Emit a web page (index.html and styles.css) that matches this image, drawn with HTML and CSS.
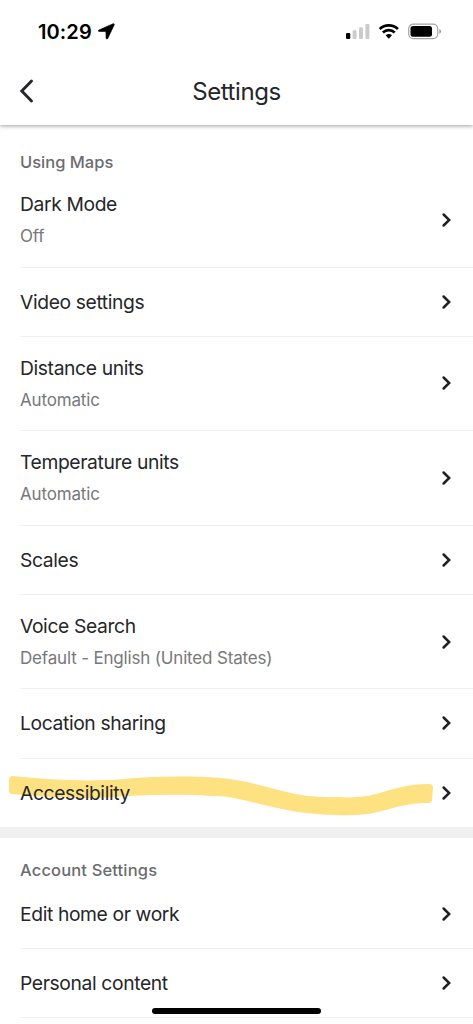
FILE: index.html
```html
<!DOCTYPE html>
<html lang="en">
<head>
<meta charset="utf-8">
<title>Settings</title>
<link rel="stylesheet" href="styles.css">
</head>
<body>
<svg class="defs" width="0" height="0" aria-hidden="true">
  <symbol id="chevron" viewBox="0 0 12 16"><path d="M2.600 2.500 8.200 8l-5.600 5.500" fill="none" stroke="#202124" stroke-width="2.500" stroke-linecap="round" stroke-linejoin="miter"/></symbol>
</svg>
<div class="screen">
  <header class="top">
    <div class="status">
      <span class="time">10:29</span>
      <svg class="arrow" width="17" height="17" viewBox="0 0 17 17"><path stroke="#000" stroke-width=".6" d="M15 .8.900 7c-1 .5-.8 1.400.3 1.400l6.700.2.200 6.500c0 1.100 1.200 1.300 1.700.3L16.200 1.900C16.500.9 16 .4 15 .8Z"/></svg>
      <svg class="icons" width="98" height="18" viewBox="0 0 98 18">
        <rect x="0" y="10" width="4.300" height="6" rx="1.300"/>
        <g fill="#cbcbcb"><rect x="6.600" y="7.300" width="4" height="8.700" rx="1.200"/><rect x="13" y="4.200" width="4" height="11.800" rx="1.200"/><rect x="19.400" y="1" width="4" height="15" rx="1.200"/></g>
        <g fill="none" stroke="#000" stroke-width="2.700"><path d="M33.700 5.900a13.300 13.300 0 0 1 18.200 0"/><path d="M36.900 9.400a8.600 8.600 0 0 1 11.800 0"/></g>
        <path d="M39.600 12.300q3.200-2.400 6.400 0L42.800 15.800Z"/>
        <rect x="62.700" y="1.200" width="29" height="14.400" rx="4.500" fill="none" stroke="#a5a5a5" stroke-width="1.200"/>
        <rect x="64.500" y="3" width="21.500" height="10.800" rx="2.500"/>
        <path d="M93.300 6q1.800.7 1.800 2.400t-1.800 2.400Z" fill="#999"/>
      </svg>
    </div>
    <div class="bar">
      <svg class="back" width="16" height="26" viewBox="0 0 16 26"><path d="M12.500 3 2.800 13l9.700 10" fill="none" stroke="#252629" stroke-width="2.900" stroke-linecap="round"/></svg>
      <h1 class="title">Settings</h1>
    </div>
  </header>
  <main>
    <section class="group">
      <h2 class="label">Using Maps</h2>
      <div class="row tall"><div><p class="name">Dark Mode</p><p class="value">Off</p></div><svg class="go"><use href="#chevron"/></svg></div>
      <div class="row"><p class="name">Video settings</p><svg class="go"><use href="#chevron"/></svg></div>
      <div class="row tall"><div><p class="name">Distance units</p><p class="value">Automatic</p></div><svg class="go"><use href="#chevron"/></svg></div>
      <div class="row tall"><div><p class="name">Temperature units</p><p class="value">Automatic</p></div><svg class="go"><use href="#chevron"/></svg></div>
      <div class="row"><p class="name">Scales</p><svg class="go"><use href="#chevron"/></svg></div>
      <div class="row tall"><div><p class="name">Voice Search</p><p class="value">Default - English (United States)</p></div><svg class="go"><use href="#chevron"/></svg></div>
      <div class="row"><p class="name">Location sharing</p><svg class="go"><use href="#chevron"/></svg></div>
      <div class="row marked">
        <svg class="marker" width="430" height="44" viewBox="0 0 430 44"><path d="M4 3C40 7 82 9 115 6 150 3 182 3 213 5 258 10 282 26 327 24 374 27 375 12 420 11Q424 11 424 14L423 27Q423 30 419 30C377 31 378 44 327 42 265 41 236 22 202 23 171 21 153 22 115 23 80 27 42 24 3 21Q0 21 0 17V7Q0 3 4 3Z" fill="#fee180"/></svg>
        <p class="name">Accessibility</p><svg class="go"><use href="#chevron"/></svg>
      </div>
    </section>
    <section class="group account">
      <h2 class="label">Account Settings</h2>
      <div class="row"><p class="name">Edit home or work</p><svg class="go"><use href="#chevron"/></svg></div>
      <div class="row"><p class="name">Personal content</p><svg class="go"><use href="#chevron"/></svg></div>
    </section>
  </main>
  <div class="home"></div>
</div>
</body>
</html>
```
FILE: styles.css
```css
* { box-sizing: border-box; }
body { margin: 0; background: #fff; font-family: Inter, "Liberation Sans", sans-serif; color: #252629; }
h1, h2, p { margin: 0; font-weight: 400; }
.defs { position: absolute; }
.screen { position: relative; height: 1024px; overflow: hidden; }
.top { height: 125px; box-shadow: 0 1px 4px rgba(0,0,0,.38); }
.status { display: flex; align-items: center; height: 63px; padding-left: 38px; }
.time { width: 54px; font-size: 20px; font-weight: 600; line-height: 24px; color: #000; letter-spacing: .1px; white-space: nowrap; }
.arrow { margin-left: 6px; }
.icons { margin: 0 29px 0 auto; }
.bar { display: grid; grid-template-columns: 60px 1fr 60px; align-items: center; height: 56px; }
.back { margin-left: 19px; }
.title { padding-top: 1px; text-align: center; font-size: 24px; line-height: 30px; letter-spacing: -.4px; }
.label { height: 48px; padding: 25px 20px 0; font-size: 16.500px; line-height: 24px; font-weight: 500; letter-spacing: 0; color: #6b6c6f; }
.row { display: flex; align-items: center; justify-content: space-between; height: 69.200px; margin-left: 20px; padding-right: 20px; border-bottom: 1px solid #f0f0f0; }
.tall { height: 94.500px; }
.tall > div { padding-top: 1px; }
.name { font-size: 19.300px; line-height: 32px; letter-spacing: -.38px; }
.value { font-size: 17px; line-height: 32px; letter-spacing: -.17px; color: #77787a; }
.go { width: 12px; height: 16px; flex: none; }
.marked { position: relative; height: 68.200px; border-bottom: 0; }
.marker { position: absolute; left: -11px; top: 14px; }
.marked .name { position: relative; }
.account { border-top: 11px solid #f0f0f0; }
.account .label { height: 42px; padding-top: 20px; letter-spacing: .15px; }
.home { position: absolute; left: 152px; top: 1008px; width: 169px; height: 6px; border-radius: 3px; background: #000; }
```
